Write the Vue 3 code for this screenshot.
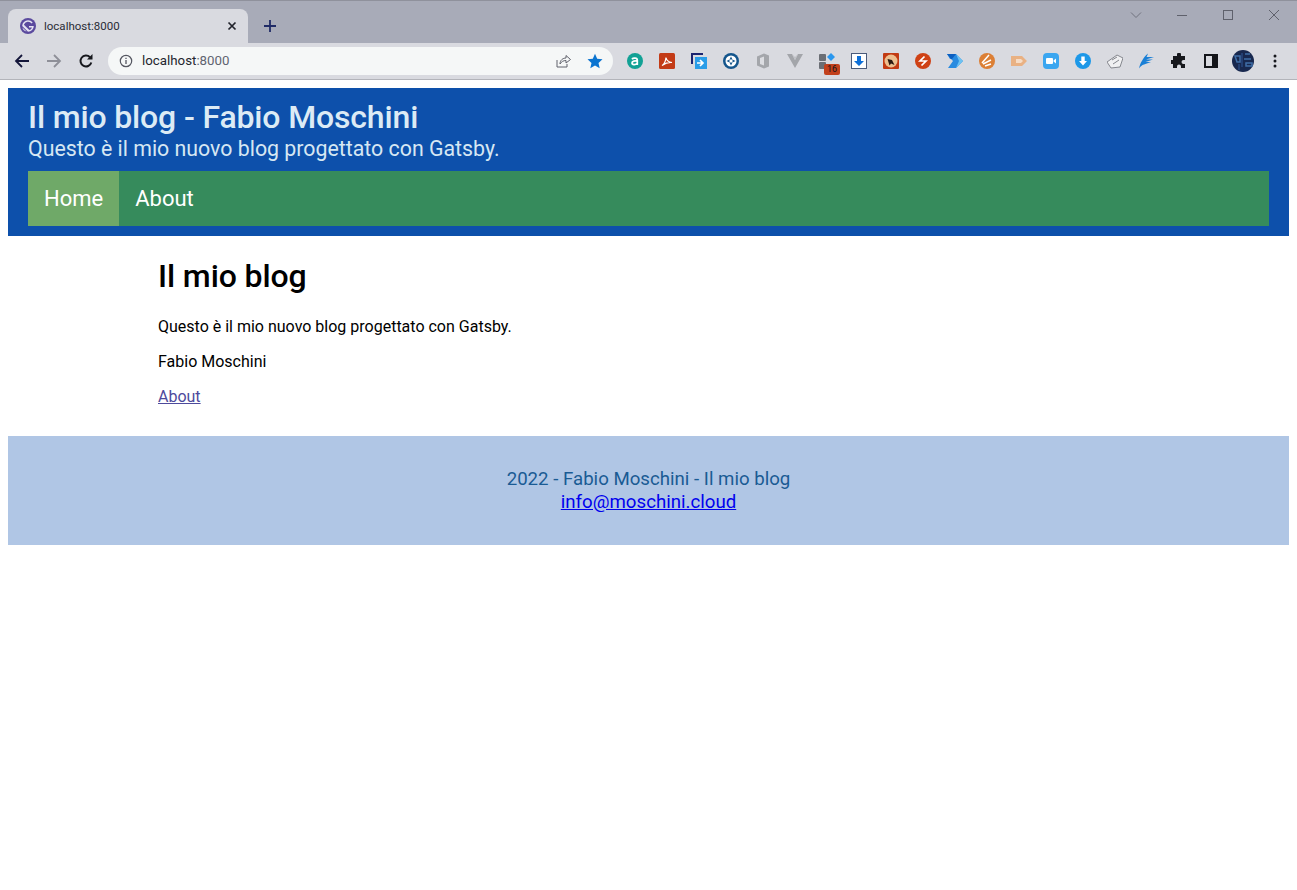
<script setup>
// toolbar extension icons are drawn in the template, one 32px slot each
const navItems = [
  { label: 'Home', active: true },
  { label: 'About', active: false }
]
</script>

<template>
  <div class="browser">
    <div class="tabstrip">
      <div class="tab">
        <svg class="favicon" viewBox="0 0 16 16" width="16" height="16">
          <circle cx="8" cy="8" r="8" fill="#5b4a9e" />
          <path d="M8 2.200A5.800 5.800 0 0 0 2.200 8L8 13.800A5.800 5.800 0 0 0 13.800 8H9v1.400h3a4.300 4.300 0 0 1-2.700 2.700L3.900 6.700A4.400 4.400 0 0 1 11.600 5.500l1.100-.9A5.800 5.800 0 0 0 8 2.200zM2.400 9.400l4.200 4.200a5.800 5.800 0 0 1-4.200-4.200z" fill="#e6e4f2" />
        </svg>
        <span class="tab-title">localhost:8000</span>
        <svg class="tab-close" viewBox="0 0 10 10" width="10" height="10">
          <path d="M1.500 1.500l7 7M8.500 1.500l-7 7" stroke="#22242c" stroke-width="1.700" fill="none" />
        </svg>
      </div>
      <svg class="new-tab" viewBox="0 0 12 12" width="12" height="12">
        <path d="M6 0v12M0 6h12" stroke="#1f2a66" stroke-width="1.800" fill="none" />
      </svg>
      <div class="window-controls">
        <svg viewBox="0 0 12 12" width="12" height="12" class="wc-chevron">
          <path d="M1 3.500l5 5 5-5" stroke="#70727e" stroke-width="1" fill="none" />
        </svg>
        <svg viewBox="0 0 12 12" width="12" height="12" class="wc-min">
          <path d="M1 6.500h10" stroke="#5f616c" stroke-width="1" fill="none" />
        </svg>
        <svg viewBox="0 0 12 12" width="12" height="12" class="wc-max">
          <rect x="1.500" y="1.500" width="9" height="9" stroke="#5f616c" stroke-width="1" fill="none" />
        </svg>
        <svg viewBox="0 0 12 12" width="12" height="12" class="wc-close">
          <path d="M1 1l10 10M11 1L1 11" stroke="#5f616c" stroke-width="1" fill="none" />
        </svg>
      </div>
    </div>

    <div class="toolbar">
      <div class="nav-buttons">
        <svg viewBox="0 0 16 16" width="16" height="16">
          <path d="M15 8H2M8 2L2 8l6 6" stroke="#14163a" stroke-width="1.800" fill="none" />
        </svg>
        <svg viewBox="0 0 16 16" width="16" height="16">
          <path d="M1 8h13M8 2l6 6-6 6" stroke="#8e8f98" stroke-width="1.800" fill="none" />
        </svg>
        <svg viewBox="0 0 16 16" width="16" height="16">
          <path d="M13.300 9.500A5.500 5.500 0 1 1 12 4.200" stroke="#17181d" stroke-width="2" fill="none" />
          <path d="M14.500 1v5.500H9z" fill="#17181d" />
        </svg>
      </div>

      <div class="omnibox">
        <svg class="info" viewBox="0 0 14 14" width="14" height="14">
          <circle cx="7" cy="7" r="5.700" stroke="#555761" stroke-width="1.200" fill="none" />
          <path d="M7 6v4M7 3.800v1.200" stroke="#555761" stroke-width="1.300" fill="none" />
        </svg>
        <span class="url">localhost<span class="url-port">:8000</span></span>
        <svg class="share" viewBox="0 0 16 16" width="16" height="16">
          <path d="M2 7v7h10v-3" stroke="#60626c" stroke-width="1" fill="none" />
          <path d="M5 11c0-4 3-6 6-6V2.500L15.500 6.500 11 10V7.500c-2.500 0-4.500 1-6 3.500z" stroke="#60626c" stroke-width="1" fill="none" />
        </svg>
        <svg class="star" viewBox="0 0 16 16" width="16" height="16">
          <path d="M8 .8l2.200 5 5.300.5-4 3.600 1.200 5.300L8 12.400l-4.700 2.800 1.200-5.300-4-3.600 5.300-.5z" fill="#0b74d0" />
        </svg>
      </div>

      <div class="extensions">
        <span class="ext">
          <svg viewBox="0 0 16 16" width="16" height="16">
            <circle cx="8" cy="8" r="8" fill="#12a195" />
            <path d="M5 6.200c1-1.500 5.300-1.700 5.300 1V12M10.300 8.300C8 7.600 5 8 5 10s3.600 2 5.300.3" stroke="#fff" stroke-width="1.700" fill="none" />
          </svg>
        </span>
        <span class="ext">
          <svg viewBox="0 0 16 16" width="16" height="16">
            <rect width="16" height="16" rx="1.500" fill="#c33b17" />
            <path d="M3 12.500c2-1 3.500-4 4-8 .5 3 2 4.500 6 5-3.500-.3-6.500.5-10 3z" stroke="#fff" stroke-width="1.200" fill="none" />
          </svg>
        </span>
        <span class="ext">
          <svg viewBox="0 0 16 16" width="16" height="16">
            <path d="M0 0h12v2H2v9H0z" fill="#1c2470" />
            <rect x="4" y="4" width="12" height="12" fill="#2a9de8" />
            <path d="M6 10h6M9 7l3 3-3 3" stroke="#fff" stroke-width="1.700" fill="none" />
          </svg>
        </span>
        <span class="ext">
          <svg viewBox="0 0 16 16" width="16" height="16">
            <circle cx="8" cy="8" r="8" fill="#14558c" />
            <circle cx="8" cy="8" r="5.500" fill="#fff" />
            <path d="M8 3.500l1.500 3h-3zM8 12.500l-1.500-3h3zM3.500 8l3-1.500v3zM12.500 8l-3 1.500v-3z" fill="#14558c" />
          </svg>
        </span>
        <span class="ext">
          <svg viewBox="0 0 16 16" width="16" height="16">
            <path d="M9 .5L2 3.500v9l7 3 5-2v-11z" fill="#a4a6ab" />
            <path d="M9 3.500L5 5v6l4 1.500z" fill="#dcdde2" />
          </svg>
        </span>
        <span class="ext">
          <svg viewBox="0 0 16 16" width="16" height="16">
            <path d="M0 1h5l3 6 3-6h5L8 15z" fill="#a3a5aa" />
            <path d="M5 1l3 6 3-6-3 3z" fill="#bfc0c5" />
          </svg>
        </span>
        <span class="ext">
          <svg viewBox="0 0 16 16" width="16" height="16">
            <rect x="0" y="1" width="7" height="7" rx="1" fill="#6b6e75" />
            <rect x="0" y="9" width="7" height="7" rx="1" fill="#6b6e75" />
            <path d="M12 0l4 4-4 4-4-4z" fill="#2b97ee" />
          </svg>
          <span class="ext-badge">16</span>
        </span>
        <span class="ext">
          <svg viewBox="0 0 16 16" width="16" height="16">
            <rect x=".5" y=".5" width="15" height="15" fill="#fff" stroke="#4a5a7a" />
            <path d="M6 3h4v5h3l-5 5-5-5h3z" fill="#0d6fd8" />
          </svg>
        </span>
        <span class="ext">
          <svg viewBox="0 0 16 16" width="16" height="16">
            <rect width="16" height="16" rx="1" fill="#c23a12" />
            <circle cx="8" cy="8" r="6.500" fill="#eebf8e" />
            <path d="M4.500 6l4.500 1 2.500 5-3.500-1.500-1.500 2z" fill="#2c1a10" />
          </svg>
        </span>
        <span class="ext">
          <svg viewBox="0 0 16 16" width="16" height="16">
            <circle cx="8" cy="8" r="8" fill="#cf4115" />
            <path d="M9.500 3.500L5 8h6l-4.500 4.500" stroke="#fff" stroke-width="1.700" fill="none" />
          </svg>
        </span>
        <span class="ext">
          <svg viewBox="0 0 16 16" width="16" height="16">
            <path d="M0 1h9l7 7-7 7H1l5-7-2-2H3z" fill="#2a8be0" />
            <path d="M9 1l7 7-7 7 3-7z" fill="#6cc2f2" />
            <path d="M0 1h9L5 6H4z" fill="#0d5fc0" />
          </svg>
        </span>
        <span class="ext">
          <svg viewBox="0 0 16 16" width="16" height="16">
            <circle cx="8" cy="8" r="8" fill="#dc7f35" />
            <path d="M3 10l7-8M4 11l8-4M6 13l6-2" stroke="#fff" stroke-width="1.500" fill="none" />
          </svg>
        </span>
        <span class="ext">
          <svg viewBox="0 0 16 16" width="16" height="16">
            <path d="M0 3h5v10H0zM5 3h6l5 5-5 5H5z" fill="#e9b183" />
            <path d="M5 6h5l2 2-2 2H5z" fill="#f6dcc6" />
          </svg>
        </span>
        <span class="ext">
          <svg viewBox="0 0 16 16" width="16" height="16">
            <rect width="16" height="16" rx="4" fill="#3ba6f0" />
            <rect x="3" y="5" width="7" height="6" rx="1" fill="#fff" />
            <path d="M10.500 7.500L13 5.500v5l-2.500-2z" fill="#fff" />
          </svg>
        </span>
        <span class="ext">
          <svg viewBox="0 0 16 16" width="16" height="16">
            <circle cx="8" cy="8" r="8" fill="#1d98e8" />
            <path d="M6.300 3.500h3.400V8H12l-4 4.500L4 8h2.300z" fill="#fff" />
          </svg>
        </span>
        <span class="ext">
          <svg viewBox="0 0 16 16" width="16" height="16">
            <path d="M0 9l10-7 6 3-3 9-9 1z" fill="#f0f0f2" stroke="#85878e" />
            <path d="M5 7l5-3M6 11l6-4" stroke="#85878e" fill="none" />
          </svg>
        </span>
        <span class="ext">
          <svg viewBox="0 0 16 16" width="16" height="16">
            <path d="M0 15.500c1-5 4-11 9-15-.5 1.500-1 2.500-1.500 3.500H15l-8 2.500h7l-7.500 2.500h5.500L5 11.500c-2 .5-3.500 2-5 4z" fill="#1a7fd6" />
          </svg>
        </span>
        <span class="ext">
          <svg viewBox="0 0 16 16" width="16" height="16">
            <path d="M6 1.500a2 2 0 0 1 4 0V3h4v4h-1.500a2 2 0 0 0 0 4H14v4h-4v-1.500a2 2 0 0 0-4 0V15H2v-4H.500a2 2 0 0 1 0-4H2V3h4z" fill="#17181d" />
          </svg>
        </span>
        <span class="ext">
          <svg viewBox="0 0 14 14" width="14" height="14">
            <rect x="1" y="1" width="12" height="12" fill="none" stroke="#14151a" stroke-width="2" />
            <rect x="8" y="1" width="5" height="12" fill="#14151a" />
          </svg>
        </span>
        <span class="ext">
          <svg viewBox="0 0 22 22" width="22" height="22">
            <circle cx="11" cy="11" r="11" fill="#18284f" />
            <path d="M3 6h5v6H5zM13 4h5M12 9h7M14 13h6v3h-6z" stroke="#3f6ea8" stroke-width="1.500" fill="none" />
            <path d="M7 14v6M10 3v14" stroke="#2c4f8a" stroke-width="1.200" fill="none" />
          </svg>
        </span>
        <span class="ext">
          <svg viewBox="0 0 4 14" width="4" height="14">
            <circle cx="2" cy="2" r="1.500" fill="#17181d" />
            <circle cx="2" cy="7" r="1.500" fill="#17181d" />
            <circle cx="2" cy="12" r="1.500" fill="#17181d" />
          </svg>
        </span>
      </div>
    </div>

    <div class="page">
      <header class="site-header">
        <h1 class="site-title">Il mio blog - Fabio Moschini</h1>
        <div class="site-subtitle">Questo è il mio nuovo blog progettato con Gatsby.</div>
        <nav class="site-nav">
          <a v-for="item in navItems" :key="item.label" :class="['nav-link', { active: item.active }]">{{ item.label }}</a>
        </nav>
      </header>

      <main class="content">
        <h2 class="content-title">Il mio blog</h2>
        <p>Questo è il mio nuovo blog progettato con Gatsby.</p>
        <p>Fabio Moschini</p>
        <p><a class="about-link" href="#">About</a></p>
      </main>

      <footer class="site-footer">
        <div>2022 - Fabio Moschini - Il mio blog</div>
        <a class="mail" href="#">info@moschini.cloud</a>
      </footer>
    </div>
  </div>
</template>

<style scoped>
.browser {
  width: 1297px;
  min-height: 890px;
  background: #fff;
  font-family: Roboto, "Liberation Sans", sans-serif;
  color: #000;
}

/* Barra delle schede */
.tabstrip {
  height: 43px;
  box-sizing: border-box;
  padding: 8px 0 0 8px;
  display: flex;
  align-items: flex-start;
  background: #a8abb8;
  border-top: 1px solid #8f919c;
}
.tab {
  width: 240px;
  height: 34px;
  box-sizing: border-box;
  padding: 0 11px 0 12px;
  display: flex;
  align-items: center;
  background: #d9dae0;
  border-radius: 8px 8px 0 0;
}
.favicon {
  flex: none;
}
.tab-title {
  margin-left: 8px;
  font-size: 11.5px;
  color: #2a2c36;
  flex: 1;
}
.new-tab {
  margin: 11px 0 0 16px;
}
.window-controls {
  margin-left: auto;
  display: flex;
  gap: 34px;
  padding: 0 17px 0 0;
}

/* Barra degli indirizzi */
.toolbar {
  height: 37px;
  box-sizing: border-box;
  display: flex;
  align-items: center;
  background: #d9dae0;
  border-bottom: 1px solid #b3b4ba;
  padding-bottom: 1px;
}
.nav-buttons {
  display: flex;
  gap: 16px;
  padding-left: 14px;
}
.omnibox {
  width: 505px;
  height: 28px;
  margin-left: 14px;
  box-sizing: border-box;
  padding: 0 10px 0 11px;
  display: flex;
  align-items: center;
  background: #f5f7f7;
  border-radius: 14px;
}
.url {
  margin-left: 9px;
  font-size: 13.300px;
  color: #24262e;
  flex: 1;
}
.url-port {
  color: #5f6470;
}
.share {
  margin-right: 16px;
}
.extensions {
  display: flex;
  align-items: center;
  margin-left: 6px;
}
.ext {
  position: relative;
  width: 32px;
  height: 24px;
  display: flex;
  align-items: center;
  justify-content: center;
}
.ext-badge {
  position: absolute;
  left: 13px;
  top: 15px;
  width: 16px;
  height: 11px;
  border-radius: 2px;
  background: #c2401c;
  color: #14151a;
  font-size: 9px;
  line-height: 11px;
  text-align: center;
}

/* Pagina */
.page {
  padding: 8px 8px 0;
}
.site-header {
  padding: 10px 20px;
  background: #0d50ab;
  color: #d6e7f3;
}
.site-title {
  margin: 0;
  font-size: 32px;
  line-height: 38px;
  font-weight: 500;
  letter-spacing: -0.15px;
  color: #dcebf5;
}
.site-subtitle {
  margin-bottom: 10px;
  font-size: 21.330px;
  line-height: 25px;
}
.site-nav {
  display: flex;
  height: 55px;
  background: #368b5c;
}
.nav-link {
  padding: 0 16px;
  font-size: 22px;
  line-height: 55px;
  color: #fff;
}
.nav-link.active {
  background: #6fa968;
}
.content {
  padding: 0 150px;
  height: 200px;
  box-sizing: border-box;
  font-size: 16px;
}
.content-title {
  margin: 0;
  padding-top: 21px;
  font-size: 32px;
  line-height: 38px;
  font-weight: 500;
  letter-spacing: -0.1px;
}
.content p {
  margin: 16px 0;
  line-height: 19px;
}
.content-title + p {
  margin-top: 22px;
}
.about-link {
  color: #4d4a9c;
}
.site-footer {
  height: 109px;
  box-sizing: border-box;
  padding-top: 32px;
  background: #b0c6e5;
  color: #1a5b94;
  font-size: 18.670px;
  line-height: 23px;
  text-align: center;
}
.mail {
  color: #0000ee;
}
</style>

<style>
body {
  background: #fff;
}
</style>
